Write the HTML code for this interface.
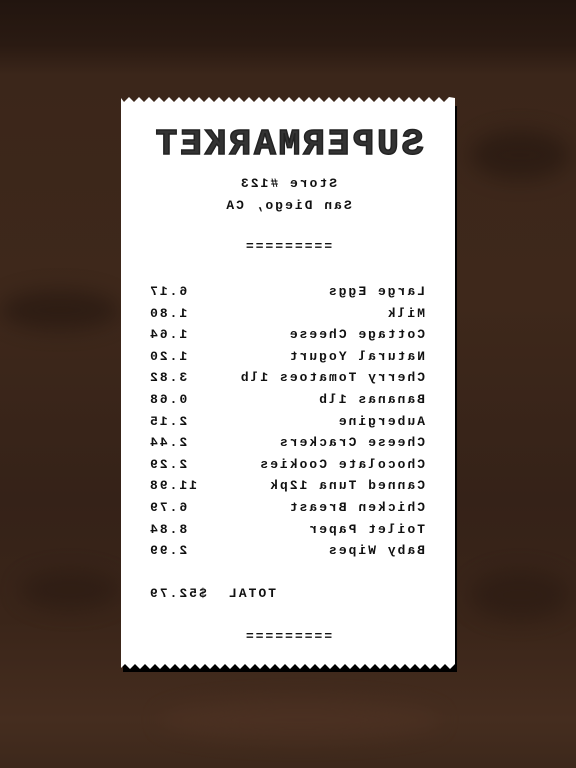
<!DOCTYPE html>
<html><head><meta charset="utf-8"><style>
html,body{margin:0;padding:0}
body{width:576px;height:768px;overflow:hidden;position:relative;background:#3b261a}
.bg{position:absolute;inset:0;background:
linear-gradient(#22150f 0,#2a1a12 45px,#3b261a 75px,#3e281b 300px,#352218 500px,#3a2519 620px,#452d1f 720px,#3d281b 768px);}
.blot{position:absolute;border-radius:50%;filter:blur(10px);opacity:.6}
.r{position:absolute;left:121px;top:102px;width:334px;height:562px;background:#fff;transform:scaleX(-1)}
.sh{position:absolute;left:123px;top:106px;width:334px;height:566px;background:#000}
.t{position:absolute;left:0;width:334px;text-align:center;font-family:"Liberation Mono",monospace;color:#222}
.title{top:22px;font-size:36px;font-weight:bold;letter-spacing:3px;color:#333;-webkit-text-stroke:1.5px #222}
.s{font-size:13px;letter-spacing:2px;color:#111;font-weight:bold}
.row{position:absolute;left:30px;width:277px;height:20px;font-family:"Liberation Mono",monospace;font-size:13px;letter-spacing:2px;color:#111;font-weight:bold}
.row span:last-child{position:absolute;right:0;top:0}
</style></head><body>
<div class="bg"></div>
<div class="blot" style="left:0;top:290px;width:120px;height:40px;background:#24160f"></div>
<div class="blot" style="left:470px;top:130px;width:100px;height:50px;background:#24160f"></div>
<div class="blot" style="left:470px;top:570px;width:100px;height:50px;background:#2a1a12"></div>
<div class="blot" style="left:20px;top:570px;width:100px;height:40px;background:#2a1a12"></div>
<div class="blot" style="left:160px;top:700px;width:280px;height:40px;background:#4e3223"></div>
<div class="sh"></div>
<svg style="position:absolute;left:121px;top:94px" width="334" height="10"><path d="M0 10 L0 4 L3 8 L8 3 L13 8 L18 3 L23 8 L28 3 L33 8 L38 3 L43 8 L48 3 L53 8 L58 3 L63 8 L68 3 L73 8 L78 3 L83 8 L88 3 L93 8 L98 3 L103 8 L108 3 L113 8 L118 3 L123 8 L128 3 L133 8 L138 3 L143 8 L148 3 L153 8 L158 3 L163 8 L168 3 L173 8 L178 3 L183 8 L188 3 L193 8 L198 3 L203 8 L208 3 L213 8 L218 3 L223 8 L228 3 L233 8 L238 3 L243 8 L248 3 L253 8 L258 3 L263 8 L268 3 L273 8 L278 3 L283 8 L288 3 L293 8 L298 3 L303 8 L308 3 L313 8 L318 3 L323 8 L328 3 L334 4 L334 10Z" fill="#fff"/></svg>
<svg style="position:absolute;left:121px;top:663px" width="340" height="14"><path d="M0 0 L0 5 L4 1 L9 6 L14 1 L19 6 L24 1 L29 6 L34 1 L39 6 L44 1 L49 6 L54 1 L59 6 L64 1 L69 6 L74 1 L79 6 L84 1 L89 6 L94 1 L99 6 L104 1 L109 6 L114 1 L119 6 L124 1 L129 6 L134 1 L139 6 L144 1 L149 6 L154 1 L159 6 L164 1 L169 6 L174 1 L179 6 L184 1 L189 6 L194 1 L199 6 L204 1 L209 6 L214 1 L219 6 L224 1 L229 6 L234 1 L239 6 L244 1 L249 6 L254 1 L259 6 L264 1 L269 6 L274 1 L279 6 L284 1 L289 6 L294 1 L299 6 L304 1 L309 6 L314 1 L319 6 L324 1 L329 6 L334 1 L334 0Z" fill="#fff"/></svg>
<div class="r">
<div class="t title">SUPERMARKET</div>
<div class="t s" style="top:74px">Store #123</div>
<div class="t s" style="top:96px">San Diego, CA</div>
<div class="t s" style="top:137px">=========</div>
<div class="row" style="top:182px"><span>Large Eggs</span><span>6.17</span></div>
<div class="row" style="top:203.6px"><span>Milk</span><span>1.80</span></div>
<div class="row" style="top:225.2px"><span>Cottage Cheese</span><span>1.64</span></div>
<div class="row" style="top:246.8px"><span>Natural Yogurt</span><span>1.20</span></div>
<div class="row" style="top:268.4px"><span>Cherry Tomatoes 1lb</span><span>3.82</span></div>
<div class="row" style="top:290px"><span>Bananas 1lb</span><span>0.68</span></div>
<div class="row" style="top:311.6px"><span>Aubergine</span><span>2.15</span></div>
<div class="row" style="top:333.2px"><span>Cheese Crackers</span><span>2.44</span></div>
<div class="row" style="top:354.8px"><span>Chocolate Cookies</span><span>2.29</span></div>
<div class="row" style="top:376.4px"><span>Canned Tuna 12pk</span><span>11.98</span></div>
<div class="row" style="top:398px"><span>Chicken Breast</span><span>6.79</span></div>
<div class="row" style="top:419.6px"><span>Toilet Paper</span><span>8.84</span></div>
<div class="row" style="top:441.2px"><span>Baby Wipes</span><span>2.99</span></div>
<div class="row" style="top:484px;left:179px;width:128px"><span>TOTAL</span><span>$52.79</span></div>
<div class="t s" style="top:527px">=========</div>
</div>
</body></html>
